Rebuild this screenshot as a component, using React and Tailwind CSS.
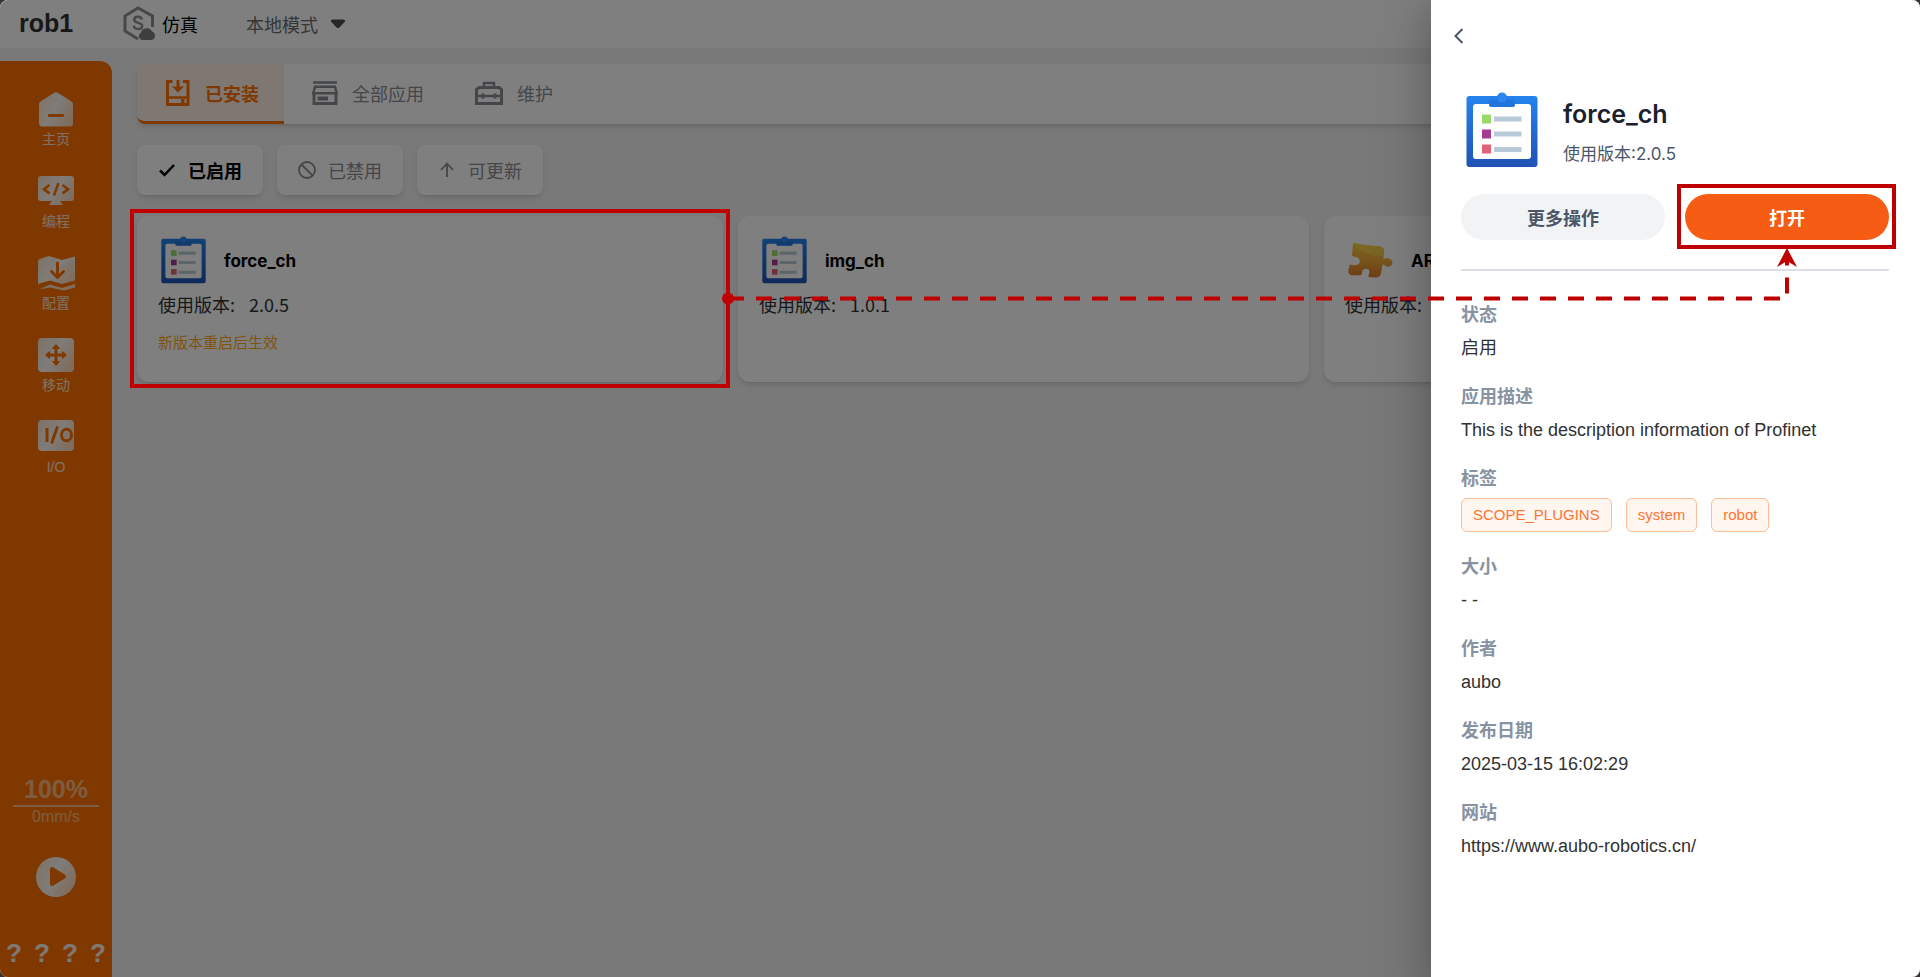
import { useState } from 'react'

const navItems = [
  { id: 'home', label: '主页', icon: HomeIcon },
  { id: 'program', label: '编程', icon: ProgramIcon },
  { id: 'config', label: '配置', icon: ConfigIcon },
  { id: 'move', label: '移动', icon: MoveIcon },
  { id: 'io', label: 'I/O', icon: IoIcon },
]

const tabs = [
  { id: 'installed', label: '已安装', icon: InstalledIcon },
  { id: 'all', label: '全部应用', icon: StoreIcon },
  { id: 'maintain', label: '维护', icon: ToolboxIcon },
]

const filters = [
  { id: 'enabled', label: '已启用', icon: CheckIcon },
  { id: 'disabled', label: '已禁用', icon: BanIcon },
  { id: 'updatable', label: '可更新', icon: UpIcon },
]

const apps = [
  { name: 'force_ch', version: '2.0.5', icon: ClipboardIcon, notice: '新版本重启后生效' },
  { name: 'img_ch', version: '1.0.1', icon: ClipboardIcon },
  { name: 'ARCS', icon: PuzzleIcon },
]

const tags = ['SCOPE_PLUGINS', 'system', 'robot']

function SheenDefs({ id }) {
  return (
    <defs>
      <linearGradient id={id} x1="0" y1="0" x2="1" y2="0.6">
        <stop offset="0" stopColor="#fff" stopOpacity="0.8" />
        <stop offset="0.55" stopColor="#fff" stopOpacity="0.95" />
        <stop offset="1" stopColor="#fff" stopOpacity="0.75" />
      </linearGradient>
    </defs>
  )
}

function HomeIcon() {
  return (
    <svg width="38" height="36" viewBox="0 0 38 36">
      <SheenDefs id="sheen-home" />
      <path d="M3.500 10.500 16.500 2.200a4 4 0 0 1 5 0l13 8.300A3 3 0 0 1 36 13.500V32a3.500 3.500 0 0 1-3.500 3.500h-27A3.500 3.500 0 0 1 2 32V13.500a3 3 0 0 1 1.500-3z" fill="url(#sheen-home)" />
      <rect x="11" y="23" width="16" height="3" rx="1" fill="#ff7300" />
    </svg>
  )
}

function ProgramIcon() {
  return (
    <svg width="38" height="36" viewBox="0 0 38 36">
      <SheenDefs id="sheen-program" />
      <path d="M4 3h30a3 3 0 0 1 3 3v19a3 3 0 0 1-3 3H23l3 4H12l3-4H4a3 3 0 0 1-3-3V6a3 3 0 0 1 3-3z" fill="url(#sheen-program)" />
      <path d="m12.500 12-5.500 4.200 5.500 4.200M25.500 12l5.500 4.200-5.500 4.200M21.500 10l-4.500 12.500" fill="none" stroke="#ff7300" strokeWidth="2.600" />
    </svg>
  )
}

function ConfigIcon() {
  return (
    <svg width="38" height="36" viewBox="0 0 38 36">
      <SheenDefs id="sheen-config" />
      <path d="M1 7c0-2 1-3 3-3.500l8-2.500 13 4 13-3.500v24L25 29l-12-3.500L1 29z" fill="url(#sheen-config)" />
      <path d="m2 34.500 11-5L25 33l13-4v3.500L27 35.500l-14-3z" fill="#fff" fillOpacity="0.75" />
      <path d="M20.500 8v14m-6-5.500 6 6 6-6" fill="none" stroke="#ff7300" strokeWidth="3" strokeLinecap="round" strokeLinejoin="round" />
    </svg>
  )
}

function MoveIcon() {
  return (
    <svg width="38" height="36" viewBox="0 0 38 36">
      <SheenDefs id="sheen-move" />
      <rect x="1" y="1" width="36" height="34" rx="4" fill="url(#sheen-move)" />
      <path d="M19 10v16M11 18h16" stroke="#ff7300" strokeWidth="3" />
      <path d="m19 7.500 3.500 4h-7zM19 28.500l3.500-4h-7zM8.500 18l4-3.500v7zM29.500 18l-4-3.500v7z" fill="#ff7300" stroke="#ff7300" strokeLinejoin="round" />
    </svg>
  )
}

function IoIcon() {
  return (
    <svg width="38" height="36" viewBox="0 0 38 36">
      <SheenDefs id="sheen-io" />
      <rect x="1" y="1" width="36" height="31" rx="4" fill="url(#sheen-io)" />
      <path d="M10 9v14M20.500 7.500l-6 17" stroke="#ff7300" strokeWidth="3" />
      <ellipse cx="29.500" cy="16" rx="5" ry="5.800" fill="none" stroke="#ff7300" strokeWidth="3" />
    </svg>
  )
}

function InstalledIcon() {
  return (
    <svg width="28" height="28" viewBox="0 0 28 28" fill="none" stroke="currentColor">
      <path d="M8.500 2.500H3.500v23h20.500v-23H19" strokeWidth="3" />
      <path d="M3 18.500h21" strokeWidth="2.500" />
      <path d="M14 1v8" strokeWidth="3" />
      <path d="M8 7.500h12l-6 6z" fill="currentColor" stroke="none" />
      <path d="M17 22h3.500" strokeWidth="4" />
    </svg>
  )
}

function StoreIcon() {
  return (
    <svg width="28" height="28" viewBox="0 0 28 28" fill="none" stroke="currentColor">
      <path d="M2 3.500h24" strokeWidth="2.500" />
      <path d="M4 7.800h20l1.700 6.500H2.300z" strokeWidth="2.500" />
      <path d="M3 14v10.500h22V14" strokeWidth="3" />
      <path d="M6.500 19.500H17" strokeWidth="4" />
    </svg>
  )
}

function ToolboxIcon() {
  return (
    <svg width="30" height="28" viewBox="0 0 30 28" fill="none" stroke="currentColor" strokeWidth="3">
      <path d="M2.500 24.500V10.500l2.500-2h20l2.500 2v14z" />
      <path d="M10 8V4h10v4M2.500 17h25" strokeWidth="2.500" />
      <path d="M9 14.500v5M21 14.500v5" />
    </svg>
  )
}

function CheckIcon() {
  return (
    <svg width="18" height="18" viewBox="0 0 18 18" fill="none" stroke="currentColor" strokeWidth="2.500">
      <path d="m2 9.500 4.500 4.500L16 4" />
    </svg>
  )
}

function BanIcon() {
  return (
    <svg width="18" height="18" viewBox="0 0 18 18" fill="none" stroke="currentColor" strokeWidth="1.800">
      <circle cx="9" cy="9" r="8" />
      <path d="m3.500 3.500 11 11" />
    </svg>
  )
}

function UpIcon() {
  return (
    <svg width="18" height="18" viewBox="0 0 18 18" fill="none" stroke="currentColor" strokeWidth="1.800">
      <path d="M9 16V3M3 9l6-6.500L15 9" />
    </svg>
  )
}

function ClipboardIcon({ className }) {
  return (
    <svg className={className} viewBox="0 0 72 76">
      <defs>
        <linearGradient id="clip" x1="0" y1="0" x2="0" y2="1">
          <stop offset="0" stopColor="#2483ee" />
          <stop offset="1" stopColor="#2152b4" />
        </linearGradient>
      </defs>
      <rect x="0.500" y="4" width="71" height="71" rx="3" fill="url(#clip)" />
      <rect x="7" y="12" width="58" height="55" rx="3" fill="#fff" />
      <path d="M23 8h7a6 6 0 0 1 12 0h7v5a2 2 0 0 1-2 2H25a2 2 0 0 1-2-2z" fill="#2375dd" />
      <circle cx="36" cy="5.500" r="5" fill="#2c86ee" />
      <path d="M16 22.500h9v9h-9z" fill="#99da68" />
      <path d="M16 37.500h9v9h-9z" fill="#a63b93" />
      <path d="M16 52.500h9v9h-9z" fill="#e06475" />
      <path d="M28 24.500h27.500v5H28zM28 39.500h27.500v5H28zM28 55h27.500v5H28z" fill="#b8cad8" />
    </svg>
  )
}

function PuzzleIcon({ className }) {
  return (
    <svg className={className} viewBox="0 0 46 48">
      <defs>
        <linearGradient id="puzzle" x1="0.300" y1="0" x2="0.200" y2="1">
          <stop offset="0" stopColor="#f5c83c" />
          <stop offset="0.500" stopColor="#f0a935" />
          <stop offset="1" stopColor="#d9772e" />
        </linearGradient>
      </defs>
      <path
        d="M5 8.500C5.300 7 6.500 6.500 8 6.800c8 2 16 2.200 24 3.200 3 .4 5 2 4.800 5l-.5 7.500c1.500.8 3-.8 5-.3 3 .8 4.700 3 4 5.500-.8 2.800-3.500 3.800-6 2.800-1.500-.6-2-2-4-2l-1.500 9c-.5 3-2.500 4.500-6 4.300l-6.800-.5c-1-1.500 1.500-3 .8-6-.5-2.200-3.500-3-5.500-1.800-2.500 1.500-1.300 4.300-3 6.200L4 39.500c-3-.4-4-2-3.500-5l1-5.500c3-.5 4 1 7 .2 3-.8 4.500-3.500 3-6-1.800-3-4.500-1.500-7.500-3.500z"
        fill="url(#puzzle)"
      />
      <path d="M5 8.500C5.300 7 6.500 6.500 8 6.800c8 2 16 2.200 24 3.200 3 .4 5 2 4.800 5l-.3 5C25 22 14 16 5 8.500z" fill="#f9dc55" fillOpacity="0.500" />
    </svg>
  )
}

function Header() {
  const [mode, setMode] = useState('local')

  return (
    <header className="flex h-12 items-center bg-white pl-[19px]">
      <h1 className="w-[103px] font-['Liberation_Sans','Noto_Sans_CJK_SC',sans-serif] text-[25px] font-bold text-[#303133]">rob1</h1>
      <div className="flex items-center gap-[6px]">
        <svg width="34" height="36" viewBox="0 0 34 36">
          <path d="M30.500 21V10L16 2 3 10v15l13 8" fill="none" stroke="#8f8f8f" strokeWidth="3" />
          <path d="M20 13.500c-.5-2-2-2.800-4-2.800-2.200 0-3.800 1-3.800 3 0 4.200 8 2 8 6.200 0 2-1.700 3.100-4 3.100-2.500 0-4.200-1.200-4.500-3.300" fill="none" stroke="#8f8f8f" strokeWidth="2.400" />
          <path d="M20 34a4 4 0 0 1-1-7.500 6 6 0 0 1 11-1 4.500 4.500 0 0 1 0 8.500z" fill="#7d7d7d" />
        </svg>
        <span className="text-lg text-black">仿真</span>
      </div>
      <div className="relative ml-12 flex items-center">
        <select
          aria-label="模式"
          value={mode}
          onChange={e => setMode(e.target.value)}
          className="h-9 w-28 appearance-none bg-transparent text-lg text-[#6a6c70]"
        >
          <option value="local">本地模式</option>
          <option value="remote">远程模式</option>
        </select>
        <svg className="pointer-events-none absolute right-3 h-[10px] w-4" viewBox="0 0 16 10">
          <path d="M2 1h12l1 1-6 6.500H7L1 2z" fill="#4c4c4c" stroke="#4c4c4c" strokeLinejoin="round" />
        </svg>
      </div>
    </header>
  )
}

function Sidebar() {
  return (
    <nav className="flex w-28 shrink-0 flex-col rounded-tr-xl bg-[#ff7300] pt-[30px] font-['Liberation_Sans','Noto_Sans_CJK_SC',sans-serif]">
      {navItems.map(({ id, label, icon: Icon }) => (
        <a key={id} href={`#${id}`} className="flex h-[82px] flex-col items-center gap-[2px] text-sm text-white/80">
          <Icon />
          {label}
        </a>
      ))}
      <div className="mt-auto flex flex-col items-center">
        <div className="w-[86px] border-b-2 border-white/50 text-center text-[25px] leading-8 font-bold text-white/50">100%</div>
        <div className="text-base text-white/50 leading-5">0mm/s</div>
        <button aria-label="运行" className="mt-[30px]">
          <svg width="40" height="40" viewBox="0 0 40 40">
            <SheenDefs id="sheen-play" />
            <circle cx="20" cy="20" r="20" fill="url(#sheen-play)" />
            <path d="M16 12v15l12-7.500z" fill="#ff7300" stroke="#ff7300" strokeWidth="4" strokeLinejoin="round" />
          </svg>
        </button>
        <div className="mt-10 mb-2 flex w-full justify-around text-[26px] leading-8 font-bold text-white/90">
          <span>?</span>
          <span>?</span>
          <span>?</span>
          <span>?</span>
        </div>
      </div>
    </nav>
  )
}

function AppCard({ app }) {
  const Icon = app.icon
  return (
    <article className="h-[166px] rounded-xl bg-white px-[21px] pt-5 shadow-md">
      <div className="flex items-center gap-[18px] pl-[3px]">
        <Icon className="h-12 w-[45px]" />
        <h2 className="pt-1 font-['Inter','Noto_Sans_CJK_SC',sans-serif] text-[17px] font-bold text-black">{app.name}</h2>
      </div>
      <p className="mt-[6px] flex gap-[14px] text-[18px] leading-7 text-[#303133]">
        <span>使用版本:</span>
        <span>{app.version}</span>
      </p>
      {app.notice && <p className="mt-[14px] text-[15px] leading-5 text-[#ffa91f]">{app.notice}</p>}
    </article>
  )
}

function Field({ label, children }) {
  return (
    <div>
      <dt className="text-lg leading-7 font-bold text-[#8792a2]">{label}</dt>
      <dd className="mt-[7px] font-['Liberation_Sans','Noto_Sans_CJK_SC',sans-serif] text-lg leading-7 text-[#303133]">{children}</dd>
    </div>
  )
}

function DetailDrawer() {
  return (
    <aside className="flex w-[489px] flex-col bg-white pr-[31px] pl-[30px] shadow-[0_16px_48px_16px_rgba(0,0,0,0.12),0_12px_32px_rgba(0,0,0,0.16)]">
      <button aria-label="返回" className="mt-6 -ml-[14px] flex h-6 w-6 items-center justify-center">
        <svg width="10" height="16" viewBox="0 0 10 16" fill="none" stroke="#4a5568" strokeWidth="2">
          <path d="M8.500 1 1.500 8l7 7" />
        </svg>
      </button>
      <div className="mt-11 flex gap-[25px] pl-[5px]">
        <ClipboardIcon className="h-[76px] w-[72px]" />
        <div>
          <h2 className="mt-1 font-['Inter','Noto_Sans_CJK_SC',sans-serif] text-[25px] leading-9 font-semibold text-[#1a202c]">force_ch</h2>
          <p className="mt-2 font-['Inter','Noto_Sans_CJK_SC',sans-serif] text-[17px] leading-7 text-[#4a5568]">使用版本:2.0.5</p>
        </div>
      </div>
      <div className="mt-[26px] grid grid-cols-2 gap-5">
        <button className="h-[46px] rounded-full bg-[#f1f3f5] text-lg font-bold text-[#4a5568]">更多操作</button>
        <button className="h-[46px] rounded-full bg-[#f65c14] text-lg font-bold text-white">打开</button>
      </div>
      <dl className="mt-[29px] flex flex-col gap-[19px] border-t-2 border-[#dcdfe6] pt-[28px]">
        <Field label="状态">启用</Field>
        <Field label="应用描述">This is the description information of Profinet</Field>
        <Field label="标签">
          <span className="flex gap-[14px]">
            {tags.map(tag => (
              <span key={tag} className="rounded-md border border-[#fdbd94] bg-[#fff6f0] px-[11px] text-[15px] leading-8 text-[#ff7433]">
                {tag}
              </span>
            ))}
          </span>
        </Field>
        <Field label="大小">- -</Field>
        <Field label="作者">aubo</Field>
        <Field label="发布日期">2025-03-15 16:02:29</Field>
        <Field label="网站">
          <a href="https://www.aubo-robotics.cn/">https://www.aubo-robotics.cn/</a>
        </Field>
      </dl>
    </aside>
  )
}

// Red guide drawn over the page: app card -> open button
function Guide() {
  return (
    <svg className="pointer-events-none absolute inset-0 h-full w-full" fill="none" stroke="#c00000" strokeWidth="4">
      <rect x="132" y="211" width="596" height="175" />
      <rect x="1679" y="186" width="215" height="61" />
      <path d="M728 298.500h1059V254" strokeDasharray="16 12" />
      <circle cx="728" cy="298.500" r="6" fill="#c00000" stroke="none" />
      <path d="m1787 248 10 19-10-6-10 6z" fill="#c00000" stroke="none" />
    </svg>
  )
}

export default function App() {
  const [activeTab, setActiveTab] = useState('installed')
  const [activeFilter, setActiveFilter] = useState('enabled')

  return (
    <div className="min-h-screen bg-[#3a3236] font-['Noto_Sans_CJK_SC',sans-serif]">
      <div className="relative flex min-h-screen flex-col overflow-hidden rounded-lg bg-[#f2f2f2]">
        <Header />
        <div className="flex flex-1 pt-[13px]">
          <Sidebar />
          <main className="min-w-0 flex-1 px-[25px] pt-[3px]">
            <div role="tablist" className="flex h-[60px] rounded-lg bg-white shadow-md">
              {tabs.map(({ id, label, icon: Icon }) => (
                <button
                  key={id}
                  role="tab"
                  aria-selected={activeTab === id}
                  onClick={() => setActiveTab(id)}
                  className={
                    activeTab === id
                      ? 'flex items-center gap-[13px] rounded-l-lg border-b-3 border-[#ff7300] bg-[#ffeee4] pr-[25px] pl-[27px] text-lg font-bold text-[#ff7300]'
                      : 'flex items-center gap-[13px] pr-[23px] pb-[2px] pl-[27px] text-lg text-[#8a8d93]'
                  }
                >
                  <Icon />
                  {label}
                </button>
              ))}
            </div>
            <div className="mt-[21px] flex gap-[14px]">
              {filters.map(({ id, label, icon: Icon }) => (
                <button
                  key={id}
                  onClick={() => setActiveFilter(id)}
                  className={
                    activeFilter === id
                      ? 'flex h-[50px] w-[126px] items-center justify-center gap-3 rounded-lg bg-white text-lg font-bold text-black shadow-md'
                      : 'flex h-[50px] w-[126px] items-center justify-center gap-3 rounded-lg bg-white text-lg text-[#8a8d93] shadow-md'
                  }
                >
                  <Icon />
                  {label}
                </button>
              ))}
            </div>
            <div className="mt-[21px] grid grid-cols-[586fr_571fr_571fr] gap-[15px]">
              {apps.map(app => (
                <AppCard key={app.name} app={app} />
              ))}
            </div>
          </main>
        </div>

        <div className="absolute inset-0 flex justify-end bg-black/50">
          <DetailDrawer />
        </div>
        <Guide />
      </div>
    </div>
  )
}
